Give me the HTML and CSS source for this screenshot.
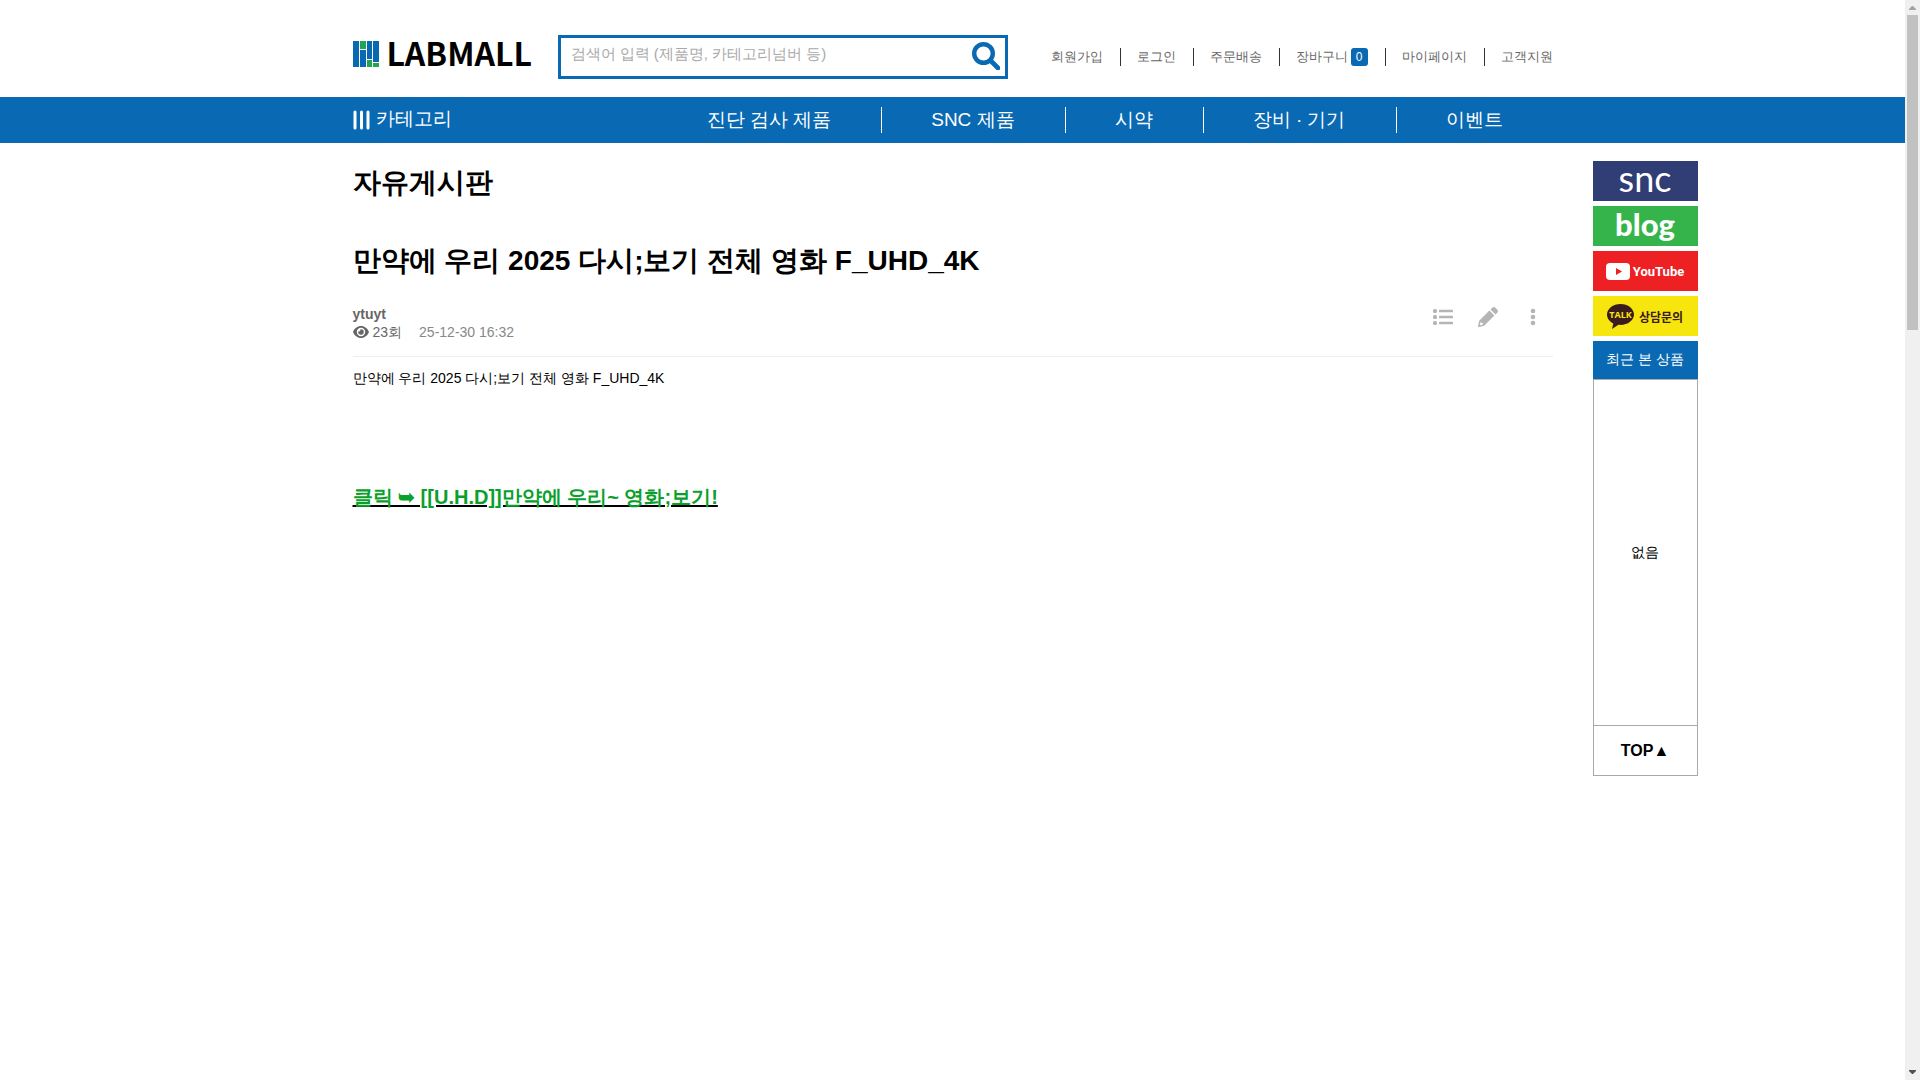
FILE: index.html
```html
<!DOCTYPE html>
<html lang="ko">
<head>
    <meta charset="UTF-8">
    <meta name="viewport" content="width=device-width, initial-scale=1.0">
    <title>자유게시판 - LABMALL</title>
    <link rel="stylesheet" href="styles.css">
</head>
<body>
<div class="page">
    <header class="header">
        <div class="inner header-inner">
            <a class="logo" href="#">
                <svg width="26" height="27" viewBox="0 0 26 27" aria-hidden="true">
                    <path fill="#0a69b3" d="M0 0h6v26H0zM7 9h6v17H7zM14 0h5v18h-5zM20 0h6v21h-6z"/>
                    <path fill="#25a451" d="M7 0h6v8H7zM14 19h5v7h-5zM20 22h6v4h-6z"/>
                </svg>
                <span>LABMALL</span>
            </a>
            <form class="search">
                <input type="text" class="search-input" aria-label="검색어" placeholder="검색어 입력 (제품명, 카테고리넘버 등)">
                <button type="button" class="search-btn" aria-label="검색">
                    <svg width="28" height="28" viewBox="0 0 28 28" fill="none" stroke="#0a69b3" aria-hidden="true">
                        <circle cx="11.5" cy="11.5" r="9.3" stroke-width="4.4"/>
                        <path d="M19 19l7 7" stroke-width="4.6" stroke-linecap="round"/>
                    </svg>
                </button>
            </form>
            <ul class="member">
                <li><a href="#">회원가입</a></li>
                <li><a href="#">로그인</a></li>
                <li><a href="#">주문배송</a></li>
                <li><a href="#">장바구니<span class="count">0</span></a></li>
                <li><a href="#">마이페이지</a></li>
                <li><a href="#">고객지원</a></li>
            </ul>
        </div>
    </header>

    <nav class="gnb">
        <div class="inner gnb-inner">
            <button type="button" class="category">
                <svg width="17" height="20" viewBox="0 0 17 20" stroke="#fff" stroke-width="3" stroke-linecap="round" aria-hidden="true">
                    <path d="M2 2v16M8.500 2v16M15 2v16"/>
                </svg>
                <span>카테고리</span>
            </button>
            <ul class="menu">
                <li><a href="#">진단 검사 제품</a></li>
                <li><a href="#">SNC 제품</a></li>
                <li><a href="#">시약</a></li>
                <li><a href="#">장비 · 기기</a></li>
                <li><a href="#">이벤트</a></li>
            </ul>
        </div>
    </nav>

    <div class="container">
        <main class="board">
            <h1 class="board-name">자유게시판</h1>
            <article>
                <h2 class="title">만약에 우리 2025 다시;보기 전체 영화 F_UHD_4K</h2>
                <div class="info">
                    <div>
                        <strong class="writer">ytuyt</strong>
                        <p class="meta">
                            <svg width="16" height="14" viewBox="0 0 16 14" aria-hidden="true">
                                <path fill="#666" fill-rule="evenodd" d="M8 1C4.400 1 1.400 3.500 0 7c1.400 3.500 4.400 6 8 6s6.600-2.500 8-6C14.600 3.500 11.600 1 8 1zm0 1.800a4.200 4.200 0 1 1 0 8.400 4.200 4.200 0 0 1 0-8.400z"/>
                                <path fill="#666" d="M8 4.200a2.800 2.800 0 1 1-2.700 2.100A1.500 1.500 0 0 0 7.300 4.300 3 3 0 0 1 8 4.200z"/>
                            </svg>
                            <span class="hit">23회</span>
                            <time>25-12-30 16:32</time>
                        </p>
                    </div>
                    <div class="tools">
                        <a href="#" aria-label="목록">
                            <svg width="20" height="20" viewBox="0 0 20 20" fill="#b5b5b5" aria-hidden="true">
                                <rect x="0" y="2" width="4" height="4" rx="1.500"/>
                                <rect x="0" y="8" width="4" height="4" rx="1.500"/>
                                <rect x="0" y="14" width="4" height="4" rx="1.500"/>
                                <rect x="6" y="2.700" width="14" height="2.600" rx=".6"/>
                                <rect x="6" y="8.700" width="14" height="2.600" rx=".6"/>
                                <rect x="6" y="14.700" width="14" height="2.600" rx=".6"/>
                            </svg>
                        </a>
                        <a href="#" aria-label="글쓰기">
                            <svg width="20" height="20" viewBox="0 0 20 20" fill="#b5b5b5" aria-hidden="true">
                                <path fill-rule="evenodd" d="M11.400 3.600l5 5L6.200 18.800 1 20a.8.8 0 0 1-1-1l1.200-5.200zM2.600 15l-.8 3.200L5 17.400 4.600 16 3 15.600z"/>
                                <path d="M12.500 2.500l1.800-1.800a2.200 2.200 0 0 1 3 0l2 2a2.200 2.200 0 0 1 0 3l-1.800 1.800z"/>
                            </svg>
                        </a>
                        <button type="button" aria-label="더보기">
                            <svg width="20" height="20" viewBox="0 0 20 20" fill="#b5b5b5" aria-hidden="true">
                                <circle cx="10" cy="4" r="2.300"/>
                                <circle cx="10" cy="10" r="2.300"/>
                                <circle cx="10" cy="16" r="2.300"/>
                            </svg>
                        </button>
                    </div>
                </div>
                <div class="content">
                    <p>만약에 우리 2025 다시;보기 전체 영화 F_UHD_4K</p>
                    <p class="link"><a href="#"><span>클릭 ➥ [[U.H.D]]만약에 우리~ 영화;보기!</span></a></p>
                </div>
            </article>
        </main>

        <aside class="quick">
            <a class="banner snc" href="#">snc</a>
            <a class="banner blog" href="#">blog</a>
            <a class="banner youtube" href="#">
                <svg width="24" height="17" viewBox="0 0 24 17" aria-hidden="true">
                    <rect width="24" height="17" rx="4" fill="#fff"/>
                    <path d="M10 5l6 3.500-6 3.500z" fill="#ed2024"/>
                </svg>
                YouTube
            </a>
            <a class="banner talk" href="#">
                <svg width="27" height="25" viewBox="0 0 27 25" aria-hidden="true">
                    <path fill="#3b1c1c" d="M13.500 0C6 0 0 4.700 0 10.500c0 3.800 2.500 7.100 6.300 8.900L5 25l6.400-4.200c.7.1 1.400.1 2.100.1C21 20.900 27 16.300 27 10.500S21 0 13.500 0z"/>
                    <text x="13.500" y="14" text-anchor="middle" class="talk-text">TALK</text>
                </svg>
                상담문의
            </a>
            <h3 class="recent">최근 본 상품</h3>
            <div class="recent-list">없음</div>
            <a class="top" href="#">TOP▲</a>
        </aside>
    </div>
</div>

<div class="scrollbar" aria-hidden="true">
    <svg width="15" height="15" viewBox="0 0 15 15"><path fill="#a3a3a3" d="M7 6h1l3 3v1H4V9z"/></svg>
    <div class="track"><div class="thumb"></div></div>
    <svg width="15" height="15" viewBox="0 0 15 15"><path fill="#505050" d="M4 5h7v1L8 9H7L4 6z"/></svg>
</div>
</body>
</html>
```
FILE: styles.css
```css
* {
    box-sizing: border-box;
    margin: 0;
    padding: 0;
}

body {
    display: flex;
    height: 100vh;
    overflow: hidden;
    font-family: "Liberation Sans", sans-serif;
    font-size: 14px;
    color: #000;
    background: #fff;
}

a {
    color: inherit;
    text-decoration: none;
}

ul {
    list-style: none;
}

button {
    border: 0;
    background: none;
    font-family: inherit;
    cursor: pointer;
}

.page {
    flex: 1;
    overflow: hidden;
}

.inner {
    max-width: 1200px;
    margin: 0 auto;
}

/* header */
.header-inner {
    display: flex;
    align-items: center;
    padding: 35px 0 18px;
}

.logo {
    display: flex;
    align-items: center;
    align-self: flex-start;
    gap: 8px;
    width: 205px;
    font-family: "Noto Sans CJK KR", sans-serif;
    font-size: 32px;
    font-weight: bold;
    line-height: 34px;
}

.logo span {
    padding-bottom: 4px;
}

.search {
    display: flex;
    width: 450px;
    height: 44px;
    border: 3px solid #0a69b3;
}

.search-input {
    flex: 1;
    min-width: 0;
    height: 30px;
    padding: 0 10px;
    border: 0;
    outline: 0;
    font-family: inherit;
    font-size: 15px;
}

.search-input::placeholder {
    color: #a9a9a9;
}

.search-btn {
    width: 38px;
}

.member {
    display: flex;
    margin-left: auto;
    font-size: 13px;
    line-height: 18px;
    color: #666;
}

.member li + li {
    margin-left: 17px;
    padding-left: 16px;
    border-left: 1px solid #333;
}

.count {
    display: inline-block;
    margin-left: 3px;
    padding: 0 5px;
    border-radius: 3px;
    background: #0a69b3;
    color: #fff;
    font-size: 12px;
}

/* navigation */
.gnb {
    background: #0a69b3;
    color: #fff;
}

.gnb-inner {
    display: flex;
    justify-content: space-between;
    align-items: center;
    height: 46px;
}

.category {
    display: flex;
    align-items: center;
    gap: 6px;
    color: #fff;
    font-size: 19px;
}

.category span {
    padding-bottom: 2px;
}

.menu {
    display: flex;
    font-size: 19px;
    line-height: 26px;
}

.menu li {
    padding: 0 50px 0 49px;
}

.menu li + li {
    border-left: 1px solid #fff;
}

/* layout */
.container {
    display: grid;
    grid-template-columns: 1fr minmax(0, 1200px) 1fr;
    padding-top: 18px;
}

.board {
    grid-column: 2;
}

.quick {
    width: 105px;
    margin-left: 40px;
}

/* article */
.board-name {
    font-size: 28px;
    line-height: 44px;
}

.title {
    margin-top: 34px;
    font-size: 28px;
    line-height: 44px;
}

.info {
    display: flex;
    justify-content: space-between;
    align-items: center;
    margin-top: 22px;
    padding-bottom: 15px;
    border-bottom: 1px solid #eee;
    line-height: 18px;
}

.writer {
    color: #666;
}

.meta {
    display: flex;
    align-items: center;
    color: #888;
}

.hit {
    margin: 0 17px 0 4px;
    color: #666;
}

.tools {
    display: flex;
    gap: 25px;
    padding: 0 10px 12px 0;
}

.tools svg {
    display: block;
}

.content {
    padding-top: 10px;
    line-height: 22px;
}

.link {
    margin-top: 93px;
    font-size: 20px;
    font-weight: bold;
    line-height: 30px;
}

.link a {
    text-decoration: underline;
}

.link span {
    color: #0aa02c;
}

/* quick banners */
.banner {
    display: flex;
    align-items: center;
    justify-content: center;
    height: 40px;
    margin-bottom: 5px;
    color: #fff;
}

.snc {
    padding-bottom: 6px;
    background: #313d75;
    font-family: Lato, sans-serif;
    font-size: 36px;
    line-height: 32px;
}

.blog {
    padding-bottom: 4px;
    background: #34b44a;
    font-family: Lato, sans-serif;
    font-size: 31px;
    font-weight: 900;
    line-height: 32px;
}

.youtube {
    gap: 3px;
    background: #ed2024;
    font-family: Roboto, sans-serif;
    font-size: 13px;
    font-weight: bold;
}

.talk {
    gap: 5px;
    background: #f7e60d;
    color: #3b1c1c;
    font-family: "Noto Sans CJK KR", sans-serif;
    font-size: 12px;
    font-weight: bold;
}

.talk-text {
    fill: #f7e60d;
    font-family: "Open Sans", sans-serif;
    font-size: 9px;
    font-weight: bold;
}

.recent {
    padding-bottom: 2px;
    background: #0a69b3;
    color: #fff;
    font-size: 14px;
    font-weight: normal;
    line-height: 36px;
    text-align: center;
}

.recent-list {
    display: flex;
    align-items: center;
    justify-content: center;
    height: 347px;
    border: 1px solid #aaa;
}

.top {
    display: block;
    border: 1px solid #aaa;
    border-top: 0;
    font-size: 16px;
    font-weight: bold;
    line-height: 49px;
    text-align: center;
}

/* scrollbar */
.scrollbar {
    display: flex;
    flex-direction: column;
    width: 15px;
    background: #f0f0f0;
}

.track {
    flex: 1;
    padding: 0 2px;
}

.thumb {
    height: 30%;
    background: #c1c1c1;
}
```
